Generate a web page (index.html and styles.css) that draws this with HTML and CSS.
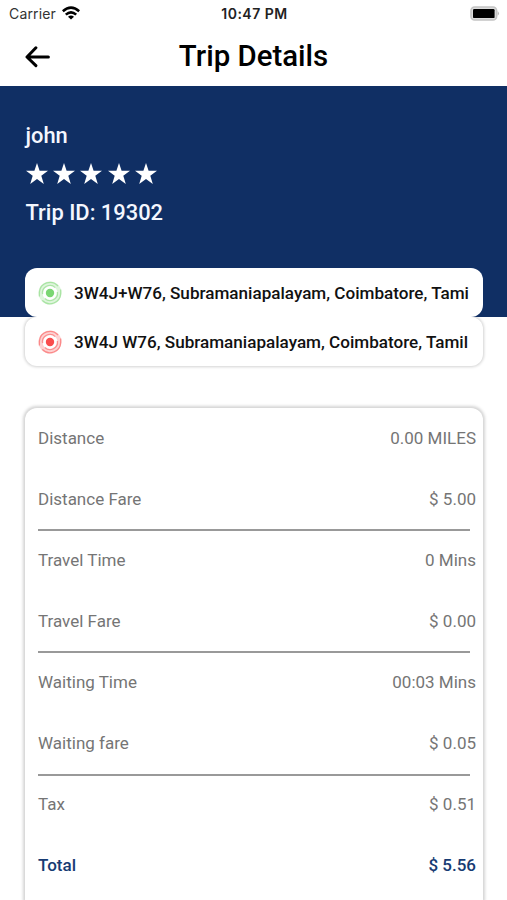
FILE: index.html
```html
<!DOCTYPE html>
<html lang="en">
<head>
<meta charset="utf-8">
<title>Trip Details</title>
<link rel="stylesheet" href="styles.css">
</head>
<body>
<div class="status">
  <div class="carrier"><span>Carrier</span>
    <svg class="wifi" width="18" height="14" viewBox="0 0 18 14"><g fill="none" stroke="#000" stroke-width="2.6"><path d="M.8 5.2Q9-2 17.2 5.2"/><path d="M3.8 8.6Q9 4 14.2 8.6"/></g><path d="M6 10.7Q9 8.2 12 10.7L9 13.6z"/></svg>
  </div>
  <span class="clock">10:47 PM</span>
  <svg class="battery" width="31" height="15" viewBox="0 0 31 15"><rect x="2" y="1" width="25.6" height="13" rx="3.6" fill="#ddd" stroke="#c4c4c4" stroke-width="1.6"/><rect x="4" y="3.1" width="21.6" height="9" rx="1.2"/><path d="M28.6 5Q31.4 7.4 28.6 9.8z" fill="#bbb"/></svg>
</div>
<header class="topbar">
  <svg class="back" width="26" height="22" viewBox="0 0 26 22"><path d="M11.9 1.8 3 11l8.9 8.6M3.4 11h21" fill="none" stroke="#000" stroke-width="3" stroke-linecap="round" stroke-linejoin="round"/></svg>
  <h1>Trip Details</h1>
</header>
<section class="hero">
  <div class="name">john</div>
  <div class="stars">
    <svg viewBox="0 0 22 21"><path d="M11 0l2.6 7.8H22l-6.7 5 2.5 8.2-6.8-5-6.8 5 2.5-8.2-6.7-5h8.4z"/></svg>
    <svg viewBox="0 0 22 21"><path d="M11 0l2.6 7.8H22l-6.7 5 2.5 8.2-6.8-5-6.8 5 2.5-8.2-6.7-5h8.4z"/></svg>
    <svg viewBox="0 0 22 21"><path d="M11 0l2.6 7.8H22l-6.7 5 2.5 8.2-6.8-5-6.8 5 2.5-8.2-6.7-5h8.4z"/></svg>
    <svg viewBox="0 0 22 21"><path d="M11 0l2.6 7.8H22l-6.7 5 2.5 8.2-6.8-5-6.8 5 2.5-8.2-6.7-5h8.4z"/></svg>
    <svg viewBox="0 0 22 21"><path d="M11 0l2.6 7.8H22l-6.7 5 2.5 8.2-6.8-5-6.8 5 2.5-8.2-6.7-5h8.4z"/></svg>
  </div>
  <div class="trip">Trip ID: 19302</div>
</section>
<section class="places">
  <div class="place">
    <svg class="pin green" viewBox="0 0 24 24"><circle class="halo" cx="12" cy="12" r="9.5"/><circle class="dot" cx="12" cy="12" r="4.2"/><path class="ring" d="M4.6 13.2A7.5 7.5 0 0 1 17.2 6.6M19.4 11A7.5 7.5 0 0 1 6.9 17.5"/><path class="ring" d="M1.4 15.5V11A10.7 10.7 0 0 1 20 5M22.7 8.5v4A10.7 10.7 0 0 1 4.3 19.4"/></svg>
    <span class="address">3W4J+W76, Subramaniapalayam, Coimbatore, Tami</span>
  </div>
  <div class="place">
    <svg class="pin red" viewBox="0 0 24 24"><circle class="halo" cx="12" cy="12" r="9.5"/><circle class="dot" cx="12" cy="12" r="4.2"/><path class="ring" d="M4.6 13.2A7.5 7.5 0 0 1 17.2 6.6M19.4 11A7.5 7.5 0 0 1 6.9 17.5"/><path class="ring" d="M1.4 15.5V11A10.7 10.7 0 0 1 20 5M22.7 8.5v4A10.7 10.7 0 0 1 4.3 19.4"/></svg>
    <span class="address">3W4J W76, Subramaniapalayam, Coimbatore, Tamil</span>
  </div>
</section>
<section class="fares">
  <div class="group">
    <div class="row"><span>Distance</span><span>0.00 MILES</span></div>
    <div class="row"><span>Distance Fare</span><span>$ 5.00</span></div>
  </div>
  <div class="group">
    <div class="row"><span>Travel Time</span><span>0 Mins</span></div>
    <div class="row"><span>Travel Fare</span><span>$ 0.00</span></div>
  </div>
  <div class="group">
    <div class="row"><span>Waiting Time</span><span>00:03 Mins</span></div>
    <div class="row"><span>Waiting fare</span><span>$ 0.05</span></div>
  </div>
  <div class="group last">
    <div class="row"><span>Tax</span><span>$ 0.51</span></div>
    <div class="row total"><span>Total</span><span>$ 5.56</span></div>
  </div>
</section>
</body>
</html>
```
FILE: styles.css
```css
* { box-sizing: border-box; }
body { margin: 0; height: 900px; overflow: hidden; display: flex; flex-direction: column; background: #fff; font-family: Roboto, "Liberation Sans", sans-serif; }
svg { display: block; flex: none; }
.status { flex: none; height: 27px; display: grid; grid-template-columns: 1fr auto 1fr; align-items: center; padding: 0 7px 0 9px; font: 14px/27px Inter, sans-serif; color: #333; }
.carrier { display: flex; align-items: center; gap: 6px; letter-spacing: .15px; }
.wifi { margin-bottom: 2px; }
.clock { font-weight: 600; font-size: 14px; letter-spacing: .5px; color: #222; }
.battery { justify-self: end; margin-bottom: 1px; }
.topbar { flex: none; height: 59px; display: grid; grid-template-columns: 26px 1fr 26px; align-items: center; padding: 0 24px; }
h1 { margin: 0; text-align: center; font-weight: 500; font-size: 29.4px; line-height: 59px; color: #000; }
.hero { flex: none; height: 231px; padding: 36px 25.5px 0; background: #102f64; color: #f4f7ff; font-weight: 500; font-size: 21.9px; line-height: 28px; }
.stars { display: flex; gap: 5.4px; height: 22px; margin: 13px 0 14px; }
.stars svg { width: 22px; height: 21px; fill: #fff; }
.places { flex: none; margin: -49px 24.5px 0 25px; display: flex; flex-direction: column; }
.place { height: 49px; display: flex; align-items: center; gap: 12px; padding: 0 13px; border-radius: 12px; background: #fff; }
.place + .place { box-shadow: 0 0 3px 1px rgba(0, 0, 0, .18); clip-path: inset(0 -5px -5px); }
.pin { width: 24px; height: 24px; }
.green { color: #7bd673; }
.red { color: #f94d4d; }
.halo { fill: none; stroke: currentColor; stroke-width: 4; opacity: .25; }
.ring { fill: none; stroke: currentColor; stroke-width: 1.3; opacity: .55; }
.dot { fill: currentColor; }
.address { white-space: nowrap; font-weight: 500; font-size: 17.1px; line-height: 24px; color: #111; }
.fares { flex: 1; min-height: 0; margin: 42px 24.5px 0 25px; padding: 0 6.5px 0 13px; background: #fff; border-radius: 12px 12px 0 0; box-shadow: 0 0 3px 1.5px rgba(0, 0, 0, .17); }
.group { height: 122.2px; position: relative; }
.group:not(.last)::after { content: ""; position: absolute; left: 0; right: 6px; bottom: -1px; height: 2px; background: #999; }
.row { height: 61.1px; display: flex; justify-content: space-between; align-items: center; padding-bottom: 2px; font-size: 17px; color: #757575; }
.group.last { height: auto; }
.total { color: #173b73; font-weight: 500; }
```
